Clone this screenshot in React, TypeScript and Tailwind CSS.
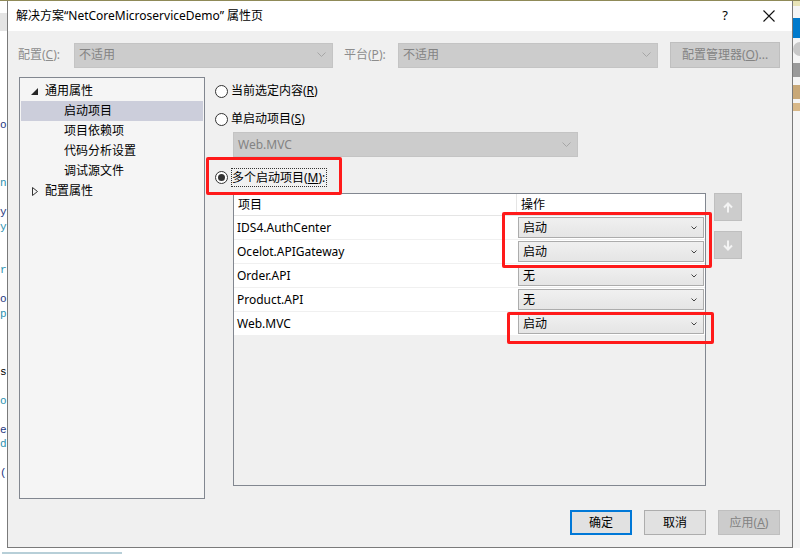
import React from "react";

const font = "font-['Noto_Sans','Noto_Sans_CJK_SC',sans-serif]";

const Chevron: React.FC<{ className?: string }> = ({ className }) => (
  <svg width="9" height="6" viewBox="0 0 9 6" className={className}>
    <path d="M0.5 0.5 L4.5 4.5 L8.5 0.5" fill="none" stroke="currentColor" strokeWidth="1" />
  </svg>
);

const Radio: React.FC<{ checked?: boolean }> = ({ checked }) => (
  <span className="w-[13px] h-[13px] rounded-full border border-[#333333] bg-white flex items-center justify-center shrink-0">
    {checked && <span className="w-[7px] h-[7px] rounded-full bg-[#333333]" />}
  </span>
);

const DisabledCombo: React.FC<{ text: string; w: string }> = ({ text, w }) => (
  <div className={`${w} h-[25px] bg-[#cccccc] border border-[#c4c4c4] flex items-center justify-between pl-[4px] pr-[6px] text-[#838383]`}>
    <span>{text}</span>
    <Chevron className="text-[#a6a6a6]" />
  </div>
);

const rows = [
  { name: "IDS4.AuthCenter", action: "启动" },
  { name: "Ocelot.APIGateway", action: "启动" },
  { name: "Order.API", action: "无" },
  { name: "Product.API", action: "无" },
  { name: "Web.MVC", action: "启动" },
];

const codeLines = ["", "", "", "", "", "", "o", "", "", "", "n", "", "y", "y", "", "", "r", "", "o", "p", "", "", "", "s", "", "o", "", "e", "d", "", "(", ""];

export default function App() {
  return (
    <div className={`w-[800px] h-[555px] overflow-hidden bg-white relative flex flex-col text-[12px] text-black ${font}`}>
      <div className="flex h-[548px] border-t border-[#8f8a58]">
        {/* editor behind, left */}
        <div className="w-[7px] flex flex-col bg-white overflow-hidden">
          <div className="h-[12px]" />
          <div className="h-[18px] bg-[#e4e4e4]" />
          <div className="flex flex-col font-['Liberation_Mono',monospace] text-[11px] leading-[14.5px]">
            {codeLines.map((c, i) => (
              <span key={i} className={i % 3 === 0 ? "text-[#1f377f]" : i % 3 === 1 ? "text-[#2b91af]" : "text-black"}>
                {c || "\u00a0"}
              </span>
            ))}
          </div>
        </div>

        {/* dialog */}
        <div className="w-[786px] flex flex-col border-x border-b border-[#7a7a7a] bg-[#f0f0f0]">
          <div className="h-[30px] bg-white flex items-center pl-[8px] shrink-0">
            <span className="flex-1">解决方案“NetCoreMicroserviceDemo” 属性页</span>
            <span className="w-[14px] text-center text-[13px] mr-[31px]">?</span>
            <svg width="12" height="12" viewBox="0 0 12 12" className="mr-[17px]">
              <path d="M0.5 0.5 L11.5 11.5 M11.5 0.5 L0.5 11.5" stroke="#111" strokeWidth="1.1" />
            </svg>
          </div>

          {/* config row */}
          <div className="flex items-center h-[26px] mt-[11px] pl-[10px]">
            <span className="w-[56px] text-[#8d8d8d]">配置(<span className="underline">C</span>):</span>
            <DisabledCombo text="不适用" w="w-[259px]" />
            <span className="w-[54px] ml-[11px] text-[#8d8d8d]">平台(<span className="underline">P</span>):</span>
            <DisabledCombo text="不适用" w="w-[260px]" />
            <div className="w-[110px] h-[26px] ml-[12px] bg-[#cccccc] border border-[#bfbfbf] flex items-center justify-center text-[#838383]">
              配置管理器(<span className="underline">O</span>)...
            </div>
          </div>

          <div className="flex mt-[9px]">
            {/* tree */}
            <div className="w-[186px] h-[422px] ml-[11px] bg-[#f5f5f5] border border-[#828790] pt-[3px] flex flex-col">
              <div className="h-[20px] flex items-center pl-[11px]">
                <svg width="7" height="7" viewBox="0 0 7 7" className="mr-[7px]">
                  <path d="M7 0 L7 7 L0 7 Z" fill="#262626" />
                </svg>
                <span>通用属性</span>
              </div>
              <div className="h-[20px] mx-[1px] bg-[#cccedb] flex items-center pl-[43px]">启动项目</div>
              <div className="h-[20px] flex items-center pl-[44px]">项目依赖项</div>
              <div className="h-[20px] flex items-center pl-[44px]">代码分析设置</div>
              <div className="h-[20px] flex items-center pl-[44px]">调试源文件</div>
              <div className="h-[20px] flex items-center pl-[12px]">
                <svg width="6" height="9" viewBox="0 0 6 9" className="mr-[7px]">
                  <path d="M0.5 0.5 L5.5 4.5 L0.5 8.5 Z" fill="none" stroke="#333" strokeWidth="1" />
                </svg>
                <span>配置属性</span>
              </div>
            </div>

            {/* right pane */}
            <div className="flex flex-col">
              <div className="h-[20px] mt-[4px] pl-[10px] flex items-center gap-[3px]">
                <Radio />
                <span>当前选定内容(<span className="underline">R</span>)</span>
              </div>
              <div className="h-[20px] mt-[8px] pl-[10px] flex items-center gap-[3px]">
                <Radio />
                <span>单启动项目(<span className="underline">S</span>)</span>
              </div>
              <div className="ml-[28px] mt-[3px]">
                <DisabledCombo text="Web.MVC" w="w-[345px]" />
              </div>
              <div className="h-[20px] mt-[10px] pl-[10px] flex items-center gap-[3px]">
                <Radio checked />
                <span className="border border-dotted border-[#333] leading-[17px] pr-[1px]">
                  多个启动项目(<span className="underline">M</span>):
                </span>
              </div>

              <div className="flex mt-[6px]">
                <div className="ml-[28px] w-[473px] h-[293px] border border-[#828790] bg-[#f0f0f0] flex flex-col">
                  <div className="h-[22px] bg-white border-b border-[#e5e5e5] flex">
                    <div className="w-[283px] border-r border-[#e5e5e5] pl-[4px] flex items-center">项目</div>
                    <div className="flex-1 pl-[4px] flex items-center">操作</div>
                  </div>
                  {rows.map((r) => (
                    <div key={r.name} className="h-[24px] bg-white border-b border-[#f0f0f0] flex items-center">
                      <div className="w-[283px] pl-[3px]">{r.name}</div>
                      <div className="ml-[1px] w-[186px] h-[21px] border border-[#acacac] bg-gradient-to-b from-[#f0f0f0] to-[#e5e5e5] flex items-center justify-between pl-[4px] pr-[6px]">
                        <span>{r.action}</span>
                        <svg width="6" height="4" viewBox="0 0 6 4">
                          <path d="M0.5 0.5 L3 3 L5.5 0.5" fill="none" stroke="#444" strokeWidth="1" />
                        </svg>
                      </div>
                    </div>
                  ))}
                </div>

                <div className="flex flex-col ml-[8px]">
                  <div className="w-[28px] h-[28px] bg-[#cccccc] border border-[#bfbfbf] flex items-center justify-center">
                    <svg width="10" height="11" viewBox="0 0 10 11">
                      <path d="M5 10.5 L5 1.5 M1 5.5 L5 1.5 L9 5.5" fill="none" stroke="#f3f3f3" strokeWidth="2" />
                    </svg>
                  </div>
                  <div className="w-[28px] h-[28px] mt-[10px] bg-[#cccccc] border border-[#bfbfbf] flex items-center justify-center">
                    <svg width="10" height="11" viewBox="0 0 10 11">
                      <path d="M5 0.5 L5 9.5 M1 5.5 L5 9.5 L9 5.5" fill="none" stroke="#f3f3f3" strokeWidth="2" />
                    </svg>
                  </div>
                </div>
              </div>
            </div>
          </div>

          {/* buttons */}
          <div className="flex justify-end gap-[12px] mt-[11px] pr-[12px]">
            <div className="w-[62px] h-[25px] bg-[#e1e1e1] border-2 border-[#0078d7] flex items-center justify-center">确定</div>
            <div className="w-[62px] h-[25px] bg-[#e1e1e1] border border-[#adadad] flex items-center justify-center">取消</div>
            <div className="w-[62px] h-[25px] bg-[#cccccc] border border-[#bfbfbf] flex items-center justify-center text-[#838383]">
              应用(<span className="underline">A</span>)
            </div>
          </div>
        </div>

        {/* solution explorer behind, right */}
        <div className="w-[7px] flex flex-col bg-[#f5f5f5] overflow-hidden">
          <div className="h-[5px] bg-[#e8e4b8]" />
          <div className="h-[12px]" />
          <div className="h-[20px] bg-[#007acc]" />
          <div className="h-[4px]" />
          <div className="h-[14px] bg-[#c8c8c8] rounded-l-full" />
          <div className="h-[7px]" />
          <div className="h-[14px] bg-[#9a9a9a]" />
          <div className="h-[8px]" />
          <div className="h-[14px] bg-[#c8a878]" />
          <div className="h-[4px]" />
          <div className="h-[8px] bg-[#d8b888]" />
        </div>
      </div>
      <div className="h-[7px] bg-white overflow-hidden pl-[2px] flex">
        <div className="h-[2px] w-[120px] mt-[4px] bg-[#b7cfd8]" />
      </div>

      {/* annotation boxes */}
      <div className="absolute left-[206px] top-[157px] w-[136px] h-[38px] border-[3px] border-[#ff1a1a] rounded-[2px]" />
      <div className="absolute left-[502px] top-[212px] w-[210px] h-[56px] border-[3px] border-[#ff1a1a] rounded-[2px]" />
      <div className="absolute left-[507px] top-[312px] w-[207px] h-[32px] border-[3px] border-[#ff1a1a] rounded-[2px]" />
    </div>
  );
}
